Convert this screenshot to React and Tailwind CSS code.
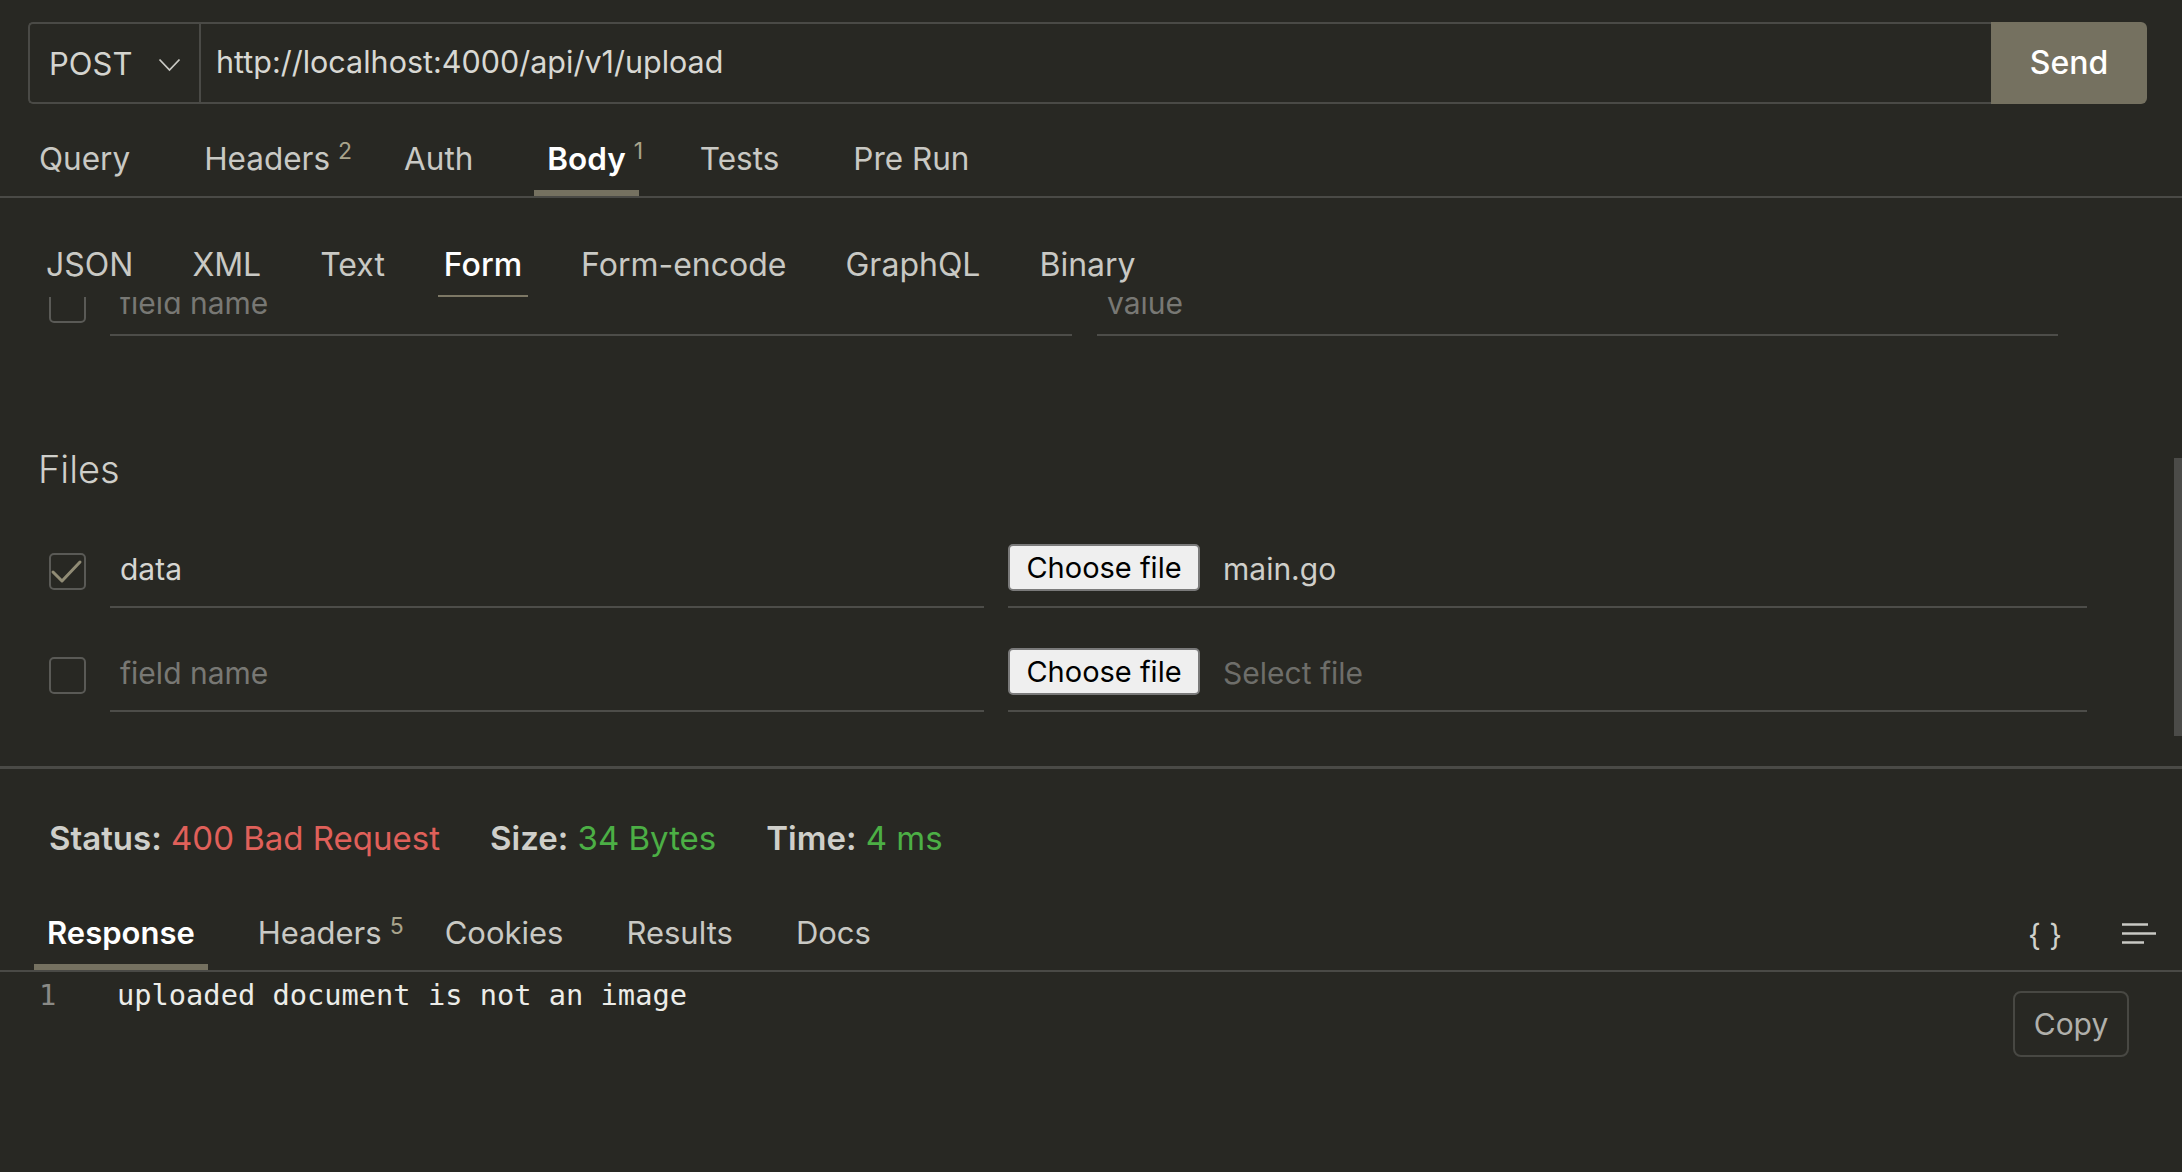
import React from "react";

function Tab({ label, sup, active, sub, small }) {
  const size = small ? "text-[31px]" : "text-[31.5px]";
  return (
    <div
      className={
        sub
          ? "px-[6px] pb-[11px] border-b-2 leading-[38px] text-[32px] " +
            (active ? "border-[#7d7865] text-white font-medium" : "border-transparent text-[#c9c9c4]")
          : "px-[13px] pb-[12px] border-b-[6px] leading-[38px] " + size + " " +
            (active ? "border-[#757160] text-white font-semibold" : "border-transparent text-[#c9c9c4]")
      }
    >
      <span className="relative">
        {label}
        {sup ? (
          <span className="absolute left-full ml-[8px] top-[1px] text-[23px] leading-none font-normal text-[#a9a48c]">
            {sup}
          </span>
        ) : null}
      </span>
    </div>
  );
}

function Checkbox({ checked }) {
  return (
    <div className="w-[37px] h-[37px] shrink-0 border-2 border-[#5a5a56] rounded-[5px] flex items-center justify-center">
      {checked ? (
        <svg width="37" height="37" viewBox="0 0 37 37" className="-m-[2px]">
          <polyline points="4,19 13,28 31,9" fill="none" stroke="#918c75" strokeWidth="3" strokeLinecap="round" strokeLinejoin="round" />
        </svg>
      ) : null}
    </div>
  );
}

function ChooseButton() {
  return (
    <div className="w-[192px] h-[47px] mb-[6px] shrink-0 bg-[#efefef] border-2 border-[#7a7a7a] rounded-[5px] flex items-center justify-center text-black text-[29px] leading-none">
      Choose file
    </div>
  );
}

export default function App() {
  return (
    <div className="w-[2182px] h-[1172px] bg-[#282823] overflow-hidden font-['Inter','Noto_Sans',sans-serif] text-[#c9c9c4]">
      {/* URL bar */}
      <div className="pt-[22px] pl-[28px] pr-[35px]">
        <div className="flex h-[82px]">
          <div className="flex flex-1 border-2 border-r-0 border-[#4a4a46] rounded-l-[5px]">
            <div className="w-[171px] flex items-center justify-between pl-[19px] pr-[18px] border-r-2 border-[#4a4a46]">
              <span className="text-[31px] text-[#d4d4cf] mt-[2px]">POST</span>
              <svg width="23" height="14" viewBox="0 0 23 14" className="mt-[4px]">
                <polyline points="1.5,1.5 11.5,12 21.5,1.5" fill="none" stroke="#c9c9c4" strokeWidth="1.8" />
              </svg>
            </div>
            <div className="flex items-center pl-[15px] pb-[3px] text-[30.5px] text-[#d8d8d3]">
              http://localhost:4000/api/v1/upload
            </div>
          </div>
          <div className="w-[156px] bg-[#757160] rounded-r-[6px] flex items-center justify-center text-white text-[32px] font-medium">
            Send
          </div>
        </div>
      </div>

      {/* Request tabs */}
      <div className="flex items-end h-[94px] border-b-2 border-[#4a4a46] pl-[26px] gap-[48px]">
        <Tab label="Query" />
        <Tab label="Headers" sup="2" />
        <Tab label="Auth" />
        <Tab label="Body" sup="1" active />
        <Tab label="Tests" />
        <Tab label="Pre Run" />
      </div>

      {/* Body sub tabs */}
      <div className="flex items-end h-[99px] pl-[40px] gap-[47px]">
        <Tab sub label="JSON" />
        <Tab sub label="XML" />
        <Tab sub label="Text" />
        <Tab sub label="Form" active />
        <Tab sub label="Form-encode" />
        <Tab sub label="GraphQL" />
        <Tab sub label="Binary" />
      </div>

      {/* Scrolled form content */}
      <div className="relative h-[472px] overflow-hidden border-b-[3px] border-[#4a4a46]">
        <div className="flex items-center h-[64px] mt-[-25px] pl-[49px]">
          <Checkbox />
          <div className="ml-[24px] w-[962px] h-[64px] border-b-2 border-[#4d4d49] flex items-center pl-[10px] text-[30px] text-[#787874]">
            field name
          </div>
          <div className="ml-[25px] w-[961px] h-[64px] border-b-2 border-[#4d4d49] flex items-center pl-[10px] text-[30px] text-[#787874]">
            value
          </div>
        </div>

        <div className="mt-[110px] pl-[38px] text-[38px] leading-[46px] font-light text-[#cfcfca]">Files</div>

        <div className="flex items-center h-[74px] mt-[42px] pl-[49px]">
          <Checkbox checked />
          <div className="ml-[24px] w-[874px] h-[74px] border-b-2 border-[#4d4d49] flex items-center pl-[10px] pb-[2px] text-[30px] text-[#d6d6d2]">
            data
          </div>
          <div className="ml-[24px] w-[1079px] h-[74px] border-b-2 border-[#4d4d49] flex items-center">
            <ChooseButton />
            <span className="ml-[23px] pb-[2px] text-[30px] text-[#cfcfca]">main.go</span>
          </div>
        </div>

        <div className="flex items-center h-[74px] mt-[30px] pl-[49px]">
          <Checkbox />
          <div className="ml-[24px] w-[874px] h-[74px] border-b-2 border-[#4d4d49] flex items-center pl-[10px] pb-[2px] text-[30px] text-[#787874]">
            field name
          </div>
          <div className="ml-[24px] w-[1079px] h-[74px] border-b-2 border-[#4d4d49] flex items-center">
            <ChooseButton />
            <span className="ml-[23px] pb-[2px] text-[30px] text-[#6e6e6a]">Select file</span>
          </div>
        </div>

        <div className="absolute right-0 top-[161px] w-[8px] h-[278px] bg-[#4b4b48]" />
      </div>

      {/* Status */}
      <div className="flex gap-[50px] pl-[49px] pt-[50px] text-[33px] leading-[38px]">
        <div>
          <span className="font-semibold text-[#cfcfca]">Status:</span>{" "}
          <span className="text-[#e0605a]">400 Bad Request</span>
        </div>
        <div>
          <span className="font-semibold text-[#cfcfca]">Size:</span>{" "}
          <span className="text-[#4caf45]">34 Bytes</span>
        </div>
        <div>
          <span className="font-semibold text-[#cfcfca]">Time:</span>{" "}
          <span className="text-[#4caf45]">4 ms</span>
        </div>
      </div>

      {/* Response tabs */}
      <div className="flex items-end justify-between mt-[57px] border-b-2 border-[#4a4a46] pl-[34px] pr-[25px]">
        <div className="flex items-end gap-[37px]">
          <Tab small label="Response" active />
          <Tab small label="Headers" sup="5" />
          <Tab small label="Cookies" />
          <Tab small label="Results" />
          <Tab small label="Docs" />
        </div>
        <div className="flex items-center h-[38px] mb-[17px] gap-[60px]">
          <span className="text-[30px] text-[#d0d0cb] leading-none mt-[2px]">{"{ }"}</span>
          <svg width="35" height="22" viewBox="0 0 35 22">
            <line x1="0" y1="1.5" x2="26" y2="1.5" stroke="#c9c9c4" strokeWidth="2.5" />
            <line x1="0" y1="10.5" x2="34" y2="10.5" stroke="#c9c9c4" strokeWidth="2.5" />
            <line x1="0" y1="19.5" x2="22" y2="19.5" stroke="#c9c9c4" strokeWidth="2.5" />
          </svg>
        </div>
      </div>

      {/* Code */}
      <div className="relative h-[200px]">
        <div className="flex pt-[3px] leading-[40px] text-[28.7px] font-['DejaVu_Sans_Mono',monospace]">
          <span className="w-[117px] pl-[39px] text-[#8a8a86]">1</span>
          <span className="text-[#ececE8]">uploaded document is not an image</span>
        </div>
        <div className="absolute top-[19px] right-[53px] w-[116px] h-[66px] border-2 border-[#484843] rounded-[8px] flex items-center justify-center text-[30px] text-[#b0b0ab]">
          Copy
        </div>
      </div>
    </div>
  );
}
